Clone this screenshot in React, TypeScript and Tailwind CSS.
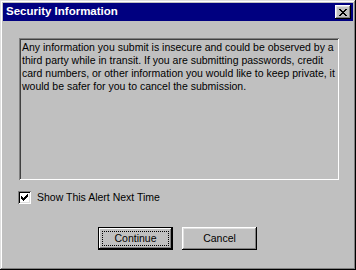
const checkRows = ['......#', '.....##', '#...###', '##.###.', '#####..', '.###...', '..#....']

export default function App() {
  const font = { fontFamily: '"Liberation Sans", Arial, sans-serif' }
  return (
    <div
      className="w-[356px] h-[270px] bg-[#c0c0c0] p-[3px] flex flex-col shadow-[inset_-1px_-1px_#000,inset_1px_1px_#dfdfdf,inset_-2px_-2px_#808080,inset_2px_2px_#fff] text-black"
      style={font}
    >
      {/* Title bar */}
      <div className="h-[18px] bg-[#000080] flex items-center justify-between pl-[3px] pr-[2px]">
        <span className="text-white font-bold text-[11.5px] leading-none">Security Information</span>
        <button className="w-[16px] h-[14px] bg-[#c0c0c0] flex items-center justify-center shadow-[inset_-1px_-1px_#000,inset_1px_1px_#fff,inset_-2px_-2px_#808080,inset_2px_2px_#dfdfdf]">
          <svg width="8" height="7" viewBox="0 0 8 7">
            <path d="M0 0h2v1h1v1h2V1h1V0h2v1H7v1H6v1H5v1h1v1h1v1h1v1H6V6H5V5H3v1H2v1H0V6h1V5h1V4h1V3H2V2H1V1H0z" fill="#000" />
          </svg>
        </button>
      </div>

      {/* Message panel */}
      <div className="mt-[17px] ml-[16px] w-[320px] h-[142px] pl-[3px] pr-[2px] pt-[3px] shadow-[inset_1px_1px_#808080,inset_-1px_-1px_#fff,inset_2px_2px_#404040]">
        <p className="text-[10.5px] leading-[13px]">
          Any information you submit is insecure and could be observed by a third party while in transit. If you are submitting passwords, credit card numbers, or other information you would like to keep private, it would be safer for you to cancel the submission.
        </p>
      </div>

      {/* Checkbox */}
      <label className="mt-[11px] ml-[15px] flex items-center gap-[6px]">
        <span className="w-[13px] h-[13px] bg-white flex items-center justify-center shadow-[inset_1px_1px_#808080,inset_-1px_-1px_#fff,inset_2px_2px_#000,inset_-2px_-2px_#dfdfdf]">
          <svg width="7" height="7" viewBox="0 0 7 7" shapeRendering="crispEdges">
            {checkRows.map((row, y) =>
              row.split('').map((c, x) => (c === '#' ? <rect key={`${x}-${y}`} x={x} y={y} width="1" height="1" fill="#000" /> : null))
            )}
          </svg>
        </span>
        <span className="text-[10.5px] leading-[13px]">Show This Alert Next Time</span>
      </label>

      {/* Buttons */}
      <div className="mt-[23px] ml-[95px] flex gap-[9px]">
        <button className="w-[75px] h-[23px] bg-[#c0c0c0] p-[4px] shadow-[inset_0_0_0_1px_#000,inset_-2px_-2px_#000,inset_2px_2px_#fff,inset_-3px_-3px_#808080]">
          <span className="w-full h-full flex items-center justify-center border border-dotted border-black text-[10.5px] leading-none">
            Continue
          </span>
        </button>
        <button className="w-[75px] h-[23px] bg-[#c0c0c0] flex items-center justify-center text-[10.5px] leading-none shadow-[inset_-1px_-1px_#000,inset_1px_1px_#fff,inset_-2px_-2px_#808080,inset_2px_2px_#dfdfdf]">
          Cancel
        </button>
      </div>
    </div>
  )
}
